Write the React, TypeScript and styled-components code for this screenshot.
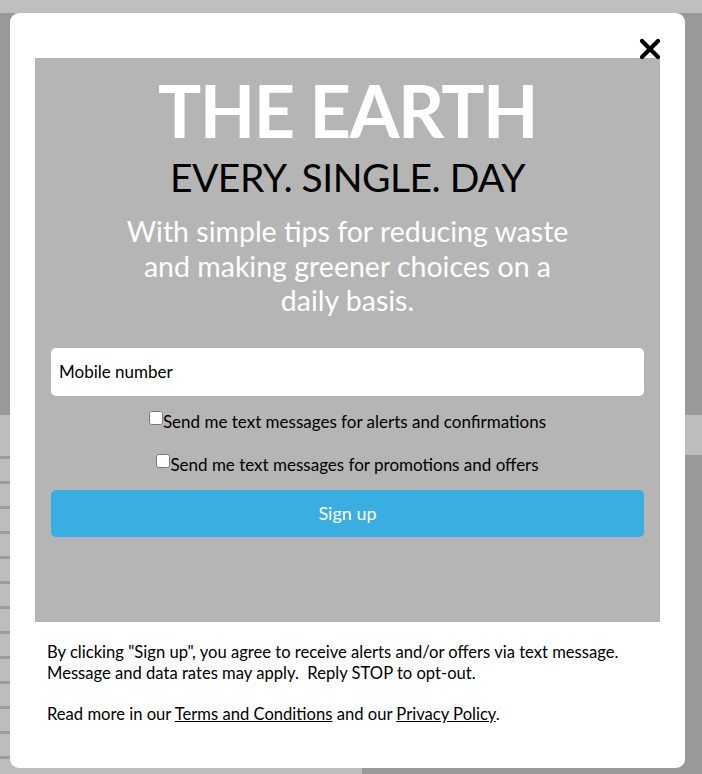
import React from "react";
import styled, { createGlobalStyle } from "styled-components";

const FONT = `Lato, "Open Sans", "Liberation Sans", sans-serif`;

const GlobalStyle = createGlobalStyle`
  html, body {
    margin: 0;
    padding: 0;
    background: #999999;
    font-family: ${FONT};
  }
`;

const Page = styled.div`
  position: relative;
  width: 702px;
  height: 774px;
  overflow: hidden;
  display: flex;
  flex-direction: column;
  background: #999999;
`;

const TopStrip = styled.div`
  height: 13px;
  background: #bfbfbf;
`;

const DarkArea = styled.div`
  height: 402px;
  background: #999999;
`;

const LightBand = styled.div`
  height: 40px;
  background: #bdbdbd;
`;

const LowerArea = styled.div`
  flex: 1;
  display: flex;
`;

const StripedColumn = styled.div`
  width: 362px;
  background: repeating-linear-gradient(
    to bottom,
    #bdbdbd 0px,
    #bdbdbd 1px,
    #9c9c9c 1px,
    #9c9c9c 4px,
    #bdbdbd 4px,
    #bdbdbd 25px
  );
`;

const Overlay = styled.div`
  position: absolute;
  top: 13px;
  left: 10px;
  width: 675px;
  height: 755px;
  box-sizing: border-box;
  background: #ffffff;
  border-radius: 9px;
  padding: 45px 25px 0;
  display: flex;
  flex-direction: column;
`;

const CloseButton = styled.button`
  position: absolute;
  top: 24px;
  right: 23px;
  width: 24px;
  height: 24px;
  padding: 0;
  border: none;
  background: transparent;
  display: flex;
  align-items: center;
  justify-content: center;
  cursor: pointer;
`;

const Hero = styled.div`
  height: 564px;
  background: #b5b5b5;
  box-sizing: border-box;
  padding: 12px 16px 0;
  display: flex;
  flex-direction: column;
  align-items: center;
`;

const Title = styled.h1`
  margin: 0;
  font-family: ${FONT};
  font-weight: 700;
  font-size: 72px;
  line-height: 80px;
  letter-spacing: -1.5px;
  color: #ffffff;
  text-align: center;
`;

const Tagline = styled.h2`
  margin: 2px 0 0;
  font-family: ${FONT};
  font-weight: 400;
  font-size: 39px;
  line-height: 50px;
  letter-spacing: -0.5px;
  color: #000000;
  text-align: center;
`;

const Lead = styled.p`
  margin: 12px 0 0;
  width: 460px;
  font-family: ${FONT};
  font-size: 28.5px;
  line-height: 34.5px;
  color: #ffffff;
  text-align: center;
`;

const Form = styled.form`
  align-self: stretch;
  margin-top: 30px;
  display: flex;
  flex-direction: column;
  align-items: center;
`;

const PhoneInput = styled.input`
  align-self: stretch;
  height: 48px;
  box-sizing: border-box;
  border: none;
  border-radius: 5px;
  background: #ffffff;
  padding: 0 8px;
  font-family: ${FONT};
  font-size: 17px;
  color: #000;
  outline: none;
  &::placeholder {
    color: #000;
    opacity: 1;
  }
`;

const CheckRow = styled.label`
  display: flex;
  align-items: center;
  margin-top: ${(p: { $first?: boolean }) => (p.$first ? "15px" : "21px")};
  font-family: ${FONT};
  font-size: 17px;
  line-height: 22px;
  color: #000;
`;

const Check = styled.input`
  margin: 0;
  width: 14px;
  height: 14px;
  position: relative;
  top: -4px;
`;

const SubmitButton = styled.button`
  align-self: stretch;
  margin-top: 14px;
  height: 47px;
  border: none;
  border-radius: 5px;
  background: #3aaee0;
  color: #ffffff;
  font-family: ${FONT};
  font-size: 18px;
  cursor: pointer;
`;

const Fine = styled.div`
  padding: 20px 12px 0;
  font-family: ${FONT};
  font-size: 16.6px;
  line-height: 21px;
  color: #000;
`;

const FineParagraph = styled.p`
  margin: 0 0 20px;
`;

const FineLink = styled.a`
  color: #000;
  text-decoration: underline;
`;

export default function App() {
  return (
    <>
      <GlobalStyle />
      <Page>
        <TopStrip />
        <DarkArea />
        <LightBand />
        <LowerArea>
          <StripedColumn />
        </LowerArea>
        <Overlay>
          <CloseButton aria-label="Close">
            <svg width="22" height="22" viewBox="0 0 22 22">
              <path
                d="M3 3 L19 19 M19 3 L3 19"
                stroke="#000"
                strokeWidth="4.2"
                strokeLinecap="round"
              />
            </svg>
          </CloseButton>
          <Hero>
            <Title>THE EARTH</Title>
            <Tagline>EVERY. SINGLE. DAY</Tagline>
            <Lead>
              With simple tips for reducing waste and making greener choices on a daily basis.
            </Lead>
            <Form onSubmit={(e) => e.preventDefault()}>
              <PhoneInput type="tel" placeholder="Mobile number" />
              <CheckRow $first>
                <Check type="checkbox" />
                Send me text messages for alerts and confirmations
              </CheckRow>
              <CheckRow>
                <Check type="checkbox" />
                Send me text messages for promotions and offers
              </CheckRow>
              <SubmitButton type="submit">Sign up</SubmitButton>
            </Form>
          </Hero>
          <Fine>
            <FineParagraph>
              By clicking "Sign up", you agree to receive alerts and/or offers via text message.
              Message and data rates may apply.&nbsp; Reply STOP to opt-out.
            </FineParagraph>
            <FineParagraph>
              Read more in our <FineLink href="#">Terms and Conditions</FineLink> and our{" "}
              <FineLink href="#">Privacy Policy</FineLink>.
            </FineParagraph>
          </Fine>
        </Overlay>
      </Page>
    </>
  );
}
